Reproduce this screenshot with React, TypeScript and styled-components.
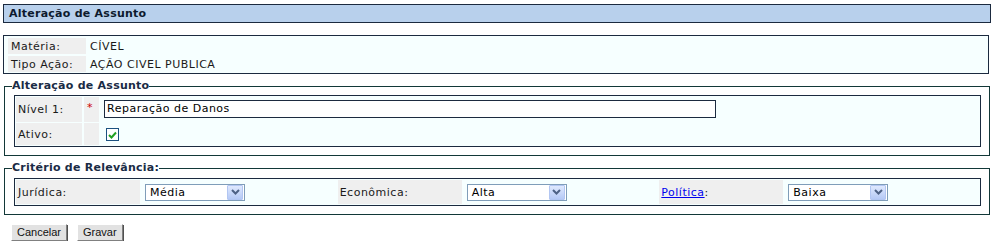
import React from "react";
import styled, { createGlobalStyle } from "styled-components";

const GlobalStyle = createGlobalStyle`
  html, body { margin: 0; padding: 0; background: #ffffff; }
  body {
    font-family: "DejaVu Sans", Verdana, sans-serif;
    font-size: 11px;
    letter-spacing: 0.5px;
    color: #1a1a1a;
  }
`;

const Page = styled.div`
  width: 995px;
  padding-top: 4px;
`;

const TitleBar = styled.div`
  margin: 0 4px 0 3px;
  height: 17px;
  line-height: 17px;
  padding-left: 5px;
  background: #b8d0ec;
  border: 1px solid #1b2a3f;
  font-weight: bold;
  letter-spacing: 0.25px;
  color: #0d1a2e;
`;

const InfoBox = styled.div`
  margin: 12px 6px 0 3px;
  border: 1px solid #1b2a3f;
  background: #f6ffff;
  display: grid;
  grid-template-columns: 78px 1fr;
  grid-auto-rows: 16px;
  row-gap: 2px;
  column-gap: 2px;
  padding: 2px 2px 1px 4px;
`;

const LabelCell = styled.div<{ $pad?: number }>`
  background: #efefef;
  display: flex;
  align-items: center;
  padding-left: ${(p) => p.$pad ?? 2}px;
  white-space: nowrap;
`;

const ValueCell = styled.div`
  display: flex;
  align-items: center;
  padding-left: 2px;
  white-space: nowrap;
`;

const FieldSet = styled.fieldset<{ $top: number }>`
  margin: ${(p) => p.$top}px 5px 0 4px;
  padding: 0 8px 8px 7px;
  border: 1px solid #123838;
  min-width: 0;
`;

const Legend = styled.legend`
  padding: 0;
  margin: 0;
  font-weight: bold;
  letter-spacing: 0.25px;
  line-height: 14px;
  color: #1a2b45;
`;

const InnerBox = styled.div<{ $cols: string; $rows: string; $top: number }>`
  margin: ${(p) => p.$top}px 0 0 2px;
  border: 1px solid #1b2a3f;
  background: #f6ffff;
  display: grid;
  grid-template-columns: ${(p) => p.$cols};
  grid-template-rows: ${(p) => p.$rows};
  column-gap: 2px;
  row-gap: 1px;
  padding: 1px;
`;

const Required = styled.div`
  background: #efefef;
  color: #cc0000;
  padding: 4px 0 0 3px;
`;

const Spacer = styled.div`
  background: #efefef;
`;

const TextInput = styled.div`
  margin: 3px 0 0 3px;
  width: 606px;
  height: 16px;
  line-height: 16px;
  padding: 0 2px;
  border: 1px solid #1b2a3f;
  background: #ffffff;
  color: #000;
  white-space: nowrap;
`;

const CheckBox = styled.span`
  display: flex;
  align-items: center;
  justify-content: center;
  margin: 5px 0 0 5px;
  width: 11px;
  height: 11px;
  border: 1px solid #1c5180;
  background: #ffffff;
`;

const SelectCell = styled.div`
  display: flex;
  align-items: center;
  padding-left: 3px;
`;

const SelectBox = styled.div`
  display: flex;
  align-items: center;
  width: 98px;
  height: 15px;
  border: 1px solid #7f9db9;
  background: #ffffff;
`;

const SelectValue = styled.span`
  flex: 1;
  padding-left: 4px;
  color: #000;
  white-space: nowrap;
`;

const SelectArrow = styled.span`
  display: flex;
  align-items: center;
  justify-content: center;
  box-sizing: border-box;
  width: 16px;
  height: 15px;
  margin-right: 1px;
  border: 1px solid #b2c6f2;
  border-radius: 1px;
  background: linear-gradient(#dfe9fe, #b5c9f6);
`;

const Link = styled.a`
  color: #0000ee;
  text-decoration: underline;
`;

const ButtonRow = styled.div`
  display: flex;
  gap: 10px;
  margin: 9px 0 0 11px;
`;

const Button = styled.button`
  font-family: "Liberation Sans", Arial, sans-serif;
  font-size: 11px;
  color: #111;
  height: 17px;
  padding: 0 5px;
  line-height: 13px;
  background: #e2e2e2;
  border: 1px solid;
  border-color: #ffffff #808080 #808080 #ffffff;
  box-shadow: 1px 1px 0 #505050;
`;

const Chevron = () => (
  <svg width="9" height="6" viewBox="0 0 9 6">
    <path d="M1 1 L4.5 4.5 L8 1" fill="none" stroke="#4d6185" strokeWidth="2" />
  </svg>
);

const Select = ({ value }: { value: string }) => (
  <SelectCell>
    <SelectBox>
      <SelectValue>{value}</SelectValue>
      <SelectArrow>
        <Chevron />
      </SelectArrow>
    </SelectBox>
  </SelectCell>
);

export default function App() {
  return (
    <>
      <GlobalStyle />
      <Page>
        <TitleBar>Alteração de Assunto</TitleBar>
        <InfoBox>
          <LabelCell $pad={3}>Matéria:</LabelCell>
          <ValueCell>CÍVEL</ValueCell>
          <LabelCell $pad={3}>Tipo Ação:</LabelCell>
          <ValueCell>AÇÃO CIVEL PUBLICA</ValueCell>
        </InfoBox>

        <FieldSet $top={5}>
          <Legend>Alteração de Assunto</Legend>
          <InnerBox $cols="66px 15px 1fr" $rows="25px 22px" $top={2}>
            <LabelCell>Nível 1:</LabelCell>
            <Required>*</Required>
            <div>
              <TextInput>Reparação de Danos</TextInput>
            </div>
            <LabelCell>Ativo:</LabelCell>
            <Spacer />
            <div>
              <CheckBox>
                <svg width="9" height="8" viewBox="0 0 9 8">
                  <path d="M1 4 L3.5 6.5 L8 1.5" fill="none" stroke="#22a022" strokeWidth="2" />
                </svg>
              </CheckBox>
            </div>
          </InnerBox>
        </FieldSet>

        <FieldSet $top={5}>
          <Legend>Critério de Relevância:</Legend>
          <InnerBox $cols="repeat(3, 124px 1fr)" $rows="24px" $top={3}>
            <LabelCell>Jurídica:</LabelCell>
            <Select value="Média" />
            <LabelCell>Econômica:</LabelCell>
            <Select value="Alta" />
            <LabelCell>
              <Link href="#">Política</Link>:
            </LabelCell>
            <Select value="Baixa" />
          </InnerBox>
        </FieldSet>

        <ButtonRow>
          <Button>Cancelar</Button>
          <Button>Gravar</Button>
        </ButtonRow>
      </Page>
    </>
  );
}
